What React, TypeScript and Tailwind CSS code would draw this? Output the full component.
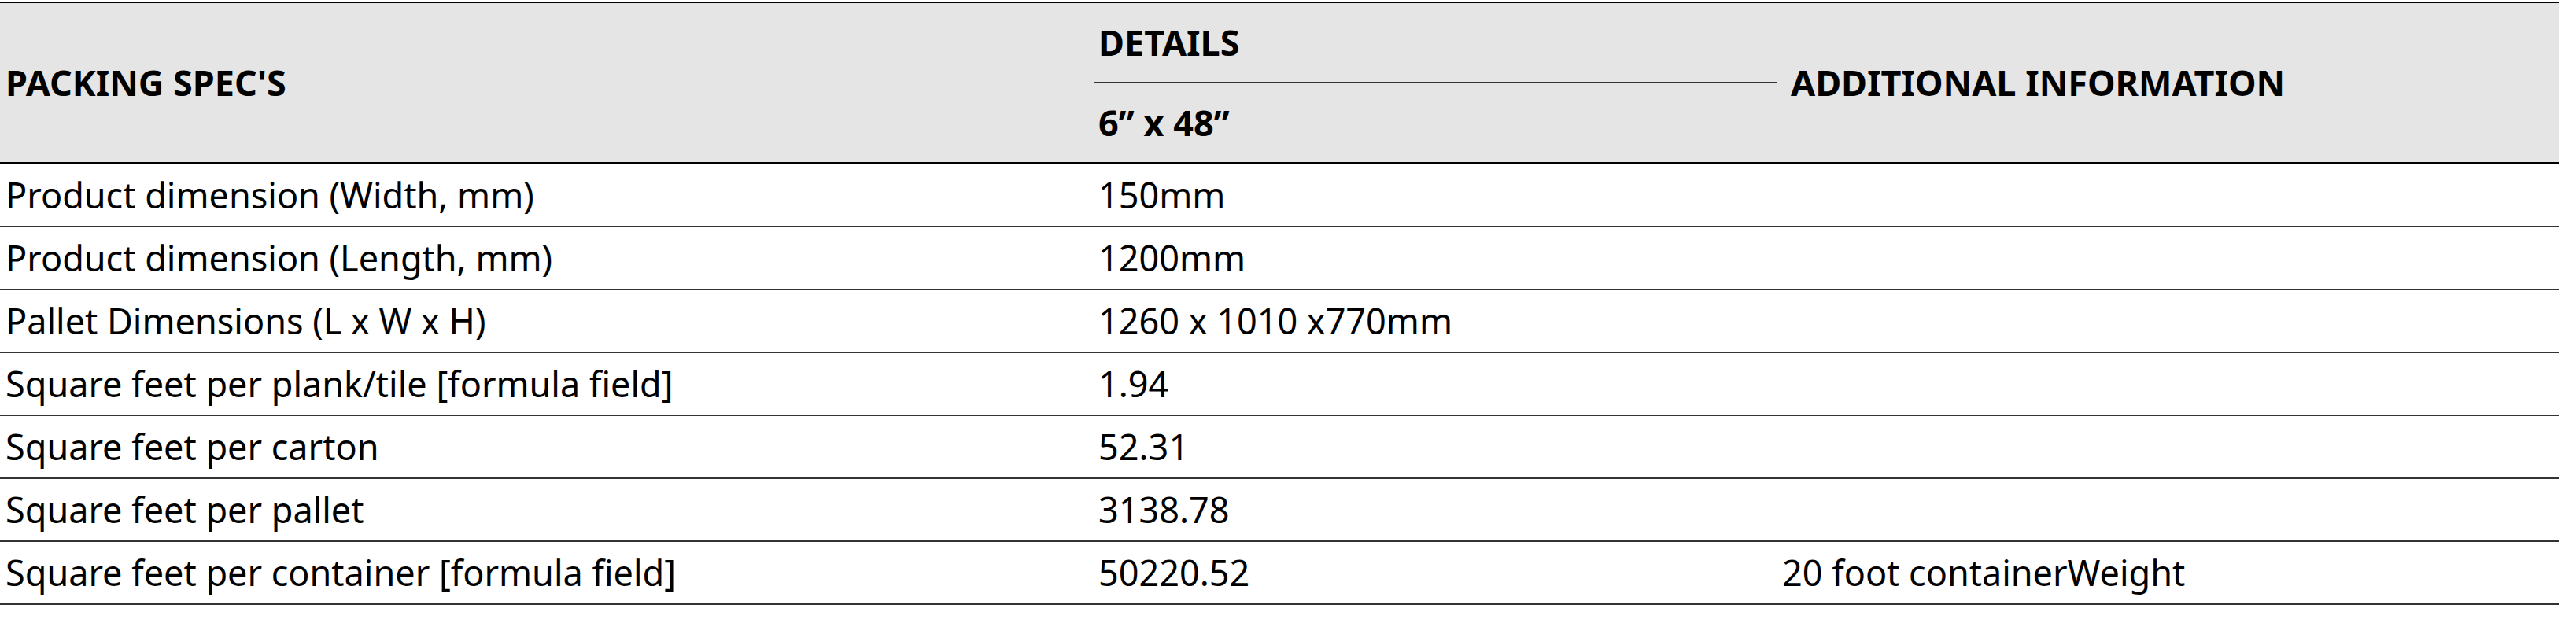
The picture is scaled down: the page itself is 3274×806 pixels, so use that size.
const rows: [string, string, string][] = [
  ['Product dimension (Width, mm)', '150mm', ''],
  ['Product dimension (Length, mm)', '1200mm', ''],
  ['Pallet Dimensions (L x W x H)', '1260 x 1010 x770mm', ''],
  ['Square feet per plank/tile [formula field]', '1.94', ''],
  ['Square feet per carton', '52.31', ''],
  ['Square feet per pallet', '3138.78', ''],
  ['Square feet per container [formula field]', '50220.52', '20 foot containerWeight'],
];

export default function App() {
  return (
    <div className="min-h-screen bg-white pt-[2px] text-black font-['Noto_Sans',sans-serif] text-[45px]">
      <div className="w-[3253px]">
        {/* header */}
        <div className="grid grid-cols-[1390px_868px_995px] border-t-2 border-b-[3px] border-black bg-[#e5e5e5] font-bold">
          <div className="flex items-center pl-[7px]">PACKING SPEC'S</div>
          <div className="flex flex-col">
            <div className="flex h-[100px] items-center pl-[6px]">DETAILS</div>
            <div className="h-[2px] bg-[#333]" />
            <div className="flex h-[100px] items-center pl-[6px]">6” x 48”</div>
          </div>
          <div className="flex items-center pl-[18px]">ADDITIONAL INFORMATION</div>
        </div>

        {/* body rows */}
        {rows.map(([label, value, extra]) => (
          <div
            key={label}
            className="grid h-[80px] grid-cols-[1390px_868px_995px] items-center border-b-2 border-[#333]"
          >
            <div className="pl-[7px]">{label}</div>
            <div className="pl-[6px]">{value}</div>
            <div className="pl-[7px]">{extra}</div>
          </div>
        ))}
      </div>
    </div>
  );
}
